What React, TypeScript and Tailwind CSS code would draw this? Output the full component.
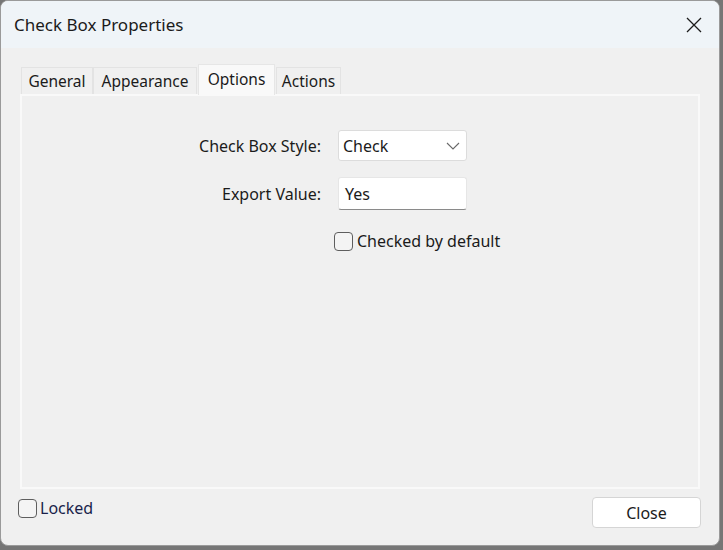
import React from "react"

const font = { fontFamily: '"Noto Sans", "Liberation Sans", sans-serif' }

function Tab({ label, active, width }: { label: string; active?: boolean; width: string }) {
    if (active) {
        return (
            <div className={`${width} h-[31px] bg-[#f9f9f9] border border-b-0 border-[#e6e6e6] flex items-center justify-center text-[15.5px] text-[#1b1b1b] -mb-px relative z-10 pb-[1px]`}>
                {label}
            </div>
        )
    }
    return (
        <div className={`${width} h-[27px] bg-[#f0f0f0] border border-b-0 border-[#e3e3e3] flex items-center justify-center text-[15.5px] text-[#1b1b1b] pt-[1px]`}>
            {label}
        </div>
    )
}

function Box() {
    return <div className="w-[19px] h-[19px] shrink-0 rounded-[4px] border border-[#5e5e5e] bg-[#f4f4f4]" />
}

export default function App() {
    return (
        <div className="w-[723px] h-[550px] bg-[#767676] overflow-hidden" style={font}>
            <div className="w-[720px] h-[546px] bg-[#f0f0f0] rounded-[8px] border border-[#9a9a9a] flex flex-col overflow-hidden">
                {/* Title bar */}
                <div className="h-[47px] bg-[#eff4f8] flex items-center justify-between pl-[13px] pr-[16px] shrink-0">
                    <span className="text-[17px] text-[#1b1b1b]">Check Box Properties</span>
                    <svg width="18" height="18" viewBox="0 0 18 18" className="mt-[1px]">
                        <path d="M2 2 L16 16 M16 2 L2 16" stroke="#1b1b1b" strokeWidth="1.3" fill="none" />
                    </svg>
                </div>

                <div className="flex-1 flex flex-col px-[19px] pt-[15px]">
                    {/* Tabs */}
                    <div className="flex items-end pl-[1px] h-[31px]">
                        <Tab label="General" width="w-[72px]" />
                        <Tab label="Appearance" width="w-[104px]" />
                        <div className="w-[1px]" />
                        <Tab label="Options" width="w-[77px]" active />
                        <div className="w-[1px]" />
                        <Tab label="Actions" width="w-[65px]" />
                    </div>

                    {/* Panel */}
                    <div className="h-[395px] border-2 border-[#f9f9f9] bg-[#f0f0f0] pt-[34px]">
                        <div className="grid grid-cols-[299px_129px] gap-x-[17px] items-center text-[16px] text-[#1b1b1b]">
                            <div className="text-right">Check Box Style:</div>
                            <div className="h-[31px] bg-white border border-[#dcdcdc] rounded-[3px] flex items-center justify-between pl-[4px] pr-[6px]">
                                <span>Check</span>
                                <svg width="14" height="8" viewBox="0 0 14 8">
                                    <path d="M1 1 L7 7 L13 1" stroke="#6a6a6a" strokeWidth="1.1" fill="none" />
                                </svg>
                            </div>

                            <div className="text-right mt-[16px]">Export Value:</div>
                            <div className="mt-[16px] h-[33px] bg-white border border-[#e6e6e6] border-b-[#8a8a8a] rounded-[3px] flex items-center pl-[6px]">
                                Yes
                            </div>

                            <div />
                            <div className="mt-[19px] -ml-[4px] flex items-center gap-[4px] whitespace-nowrap">
                                <Box />
                                <span>Checked by default</span>
                            </div>
                        </div>
                    </div>

                    {/* Footer */}
                    <div className="flex justify-between items-start pt-[8px]">
                        <div className="flex items-center gap-[3px] -ml-[2px] -mt-[1px] text-[16px] text-[#1a1f4a]">
                            <Box />
                            <span>Locked</span>
                        </div>
                        <button className="w-[109px] h-[31px] -mr-[1px] bg-white border border-[#d5d5d5] rounded-[4px] text-[16px] text-[#1b1b1b]">
                            Close
                        </button>
                    </div>
                </div>
            </div>
        </div>
    )
}
